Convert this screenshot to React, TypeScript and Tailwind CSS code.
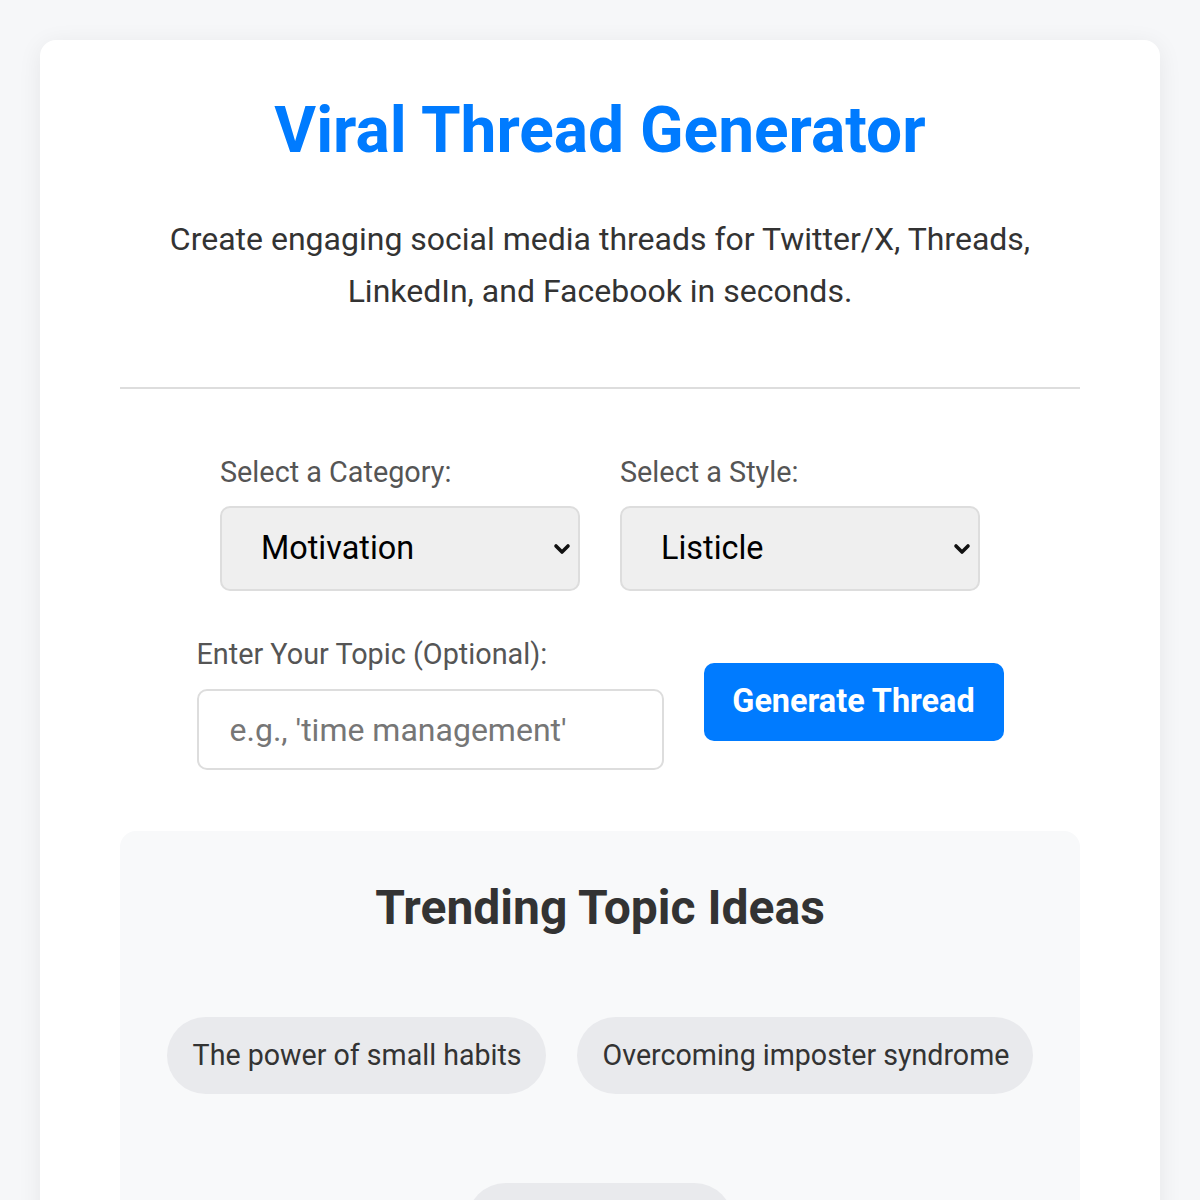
import React from "react";

const font = { fontFamily: "Roboto, 'Liberation Sans', sans-serif" };

function Chevron() {
  return (
    <svg
      className="pointer-events-none absolute right-[9px] top-1/2 -translate-y-1/2"
      width="18"
      height="12"
      viewBox="0 0 18 12"
      fill="none"
    >
      <path d="M3 3 L9 9 L15 3" stroke="#111" strokeWidth="3.6" strokeLinecap="round" strokeLinejoin="round" />
    </svg>
  );
}

function SelectField({ label, value, options }: { label: string; value: string; options: string[] }) {
  return (
    <div className="flex w-[360px] flex-col">
      <label className="mb-[18px] text-[28.8px] leading-[32px] text-[#555]">{label}</label>
      <div className="relative">
        <select
          defaultValue={value}
          className="h-[85px] w-full appearance-none rounded-[10px] border-2 border-[#dddddd] bg-[#efefef] pl-[39px] text-[32.4px] text-black outline-none"
          style={font}
        >
          {options.map((o) => (
            <option key={o}>{o}</option>
          ))}
        </select>
        <Chevron />
      </div>
    </div>
  );
}

const topics = ["The power of small habits", "Overcoming imposter syndrome", "Morning routines"];

export default function App() {
  return (
    <div className="min-h-[1200px] bg-[#f6f7f9] px-[40px] pt-[40px]" style={font}>
      <div className="rounded-[16px] bg-white px-[80px] pt-[53px] pb-[40px] shadow-[0_4px_24px_rgba(0,0,0,0.07)]">
        <h1 className="text-center text-[64px] font-bold leading-[76px] text-[#007bff]">Viral Thread Generator</h1>
        <p className="mx-auto mt-[44px] max-w-[900px] text-center text-[32px] leading-[52px] text-[#333]">
          Create engaging social media threads for Twitter/X, Threads, LinkedIn, and Facebook in seconds.
        </p>
        <hr className="mt-[70px] border-0 border-t-2 border-[#dddddd]" />

        <div className="mt-[67px] flex justify-center gap-[40px]">
          <SelectField
            label="Select a Category:"
            value="Motivation"
            options={["Motivation", "Productivity", "Business", "Self-Improvement"]}
          />
          <SelectField label="Select a Style:" value="Listicle" options={["Listicle", "Storytelling", "How-To", "Hot Take"]} />
        </div>

        <div className="mt-[47px] flex items-center justify-center gap-[40px]">
          <div className="flex w-[467px] flex-col">
            <label className="mb-[19px] text-[28.8px] leading-[32px] text-[#555]">Enter Your Topic (Optional):</label>
            <input
              type="text"
              placeholder="e.g., 'time management'"
              className="h-[81px] w-full rounded-[10px] border-2 border-[#dddddd] bg-white pl-[31px] text-[32px] text-[#333] outline-none placeholder:text-[#767676]"
              style={font}
            />
          </div>
          <button className="mb-[5px] h-[78px] w-[300px] rounded-[10px] bg-[#007bff] text-[32.4px] font-bold text-white" style={font}>
            Generate Thread
          </button>
        </div>

        <div className="mt-[61px] rounded-[16px] bg-[#f8f9fa] px-[36px] pt-[49px] pb-[40px]">
          <h2 className="text-center text-[48px] font-bold leading-[56px] text-[#333]">Trending Topic Ideas</h2>
          <div className="mt-[81px] flex flex-wrap justify-center gap-x-[31px] gap-y-[89px]">
            {topics.map((t) => (
              <button
                key={t}
                className="h-[77px] rounded-full bg-[#e9eaed] pl-[26px] pr-[24px] text-[28.6px] text-[#333]"
                style={font}
              >
                {t}
              </button>
            ))}
          </div>
        </div>
      </div>
    </div>
  );
}
